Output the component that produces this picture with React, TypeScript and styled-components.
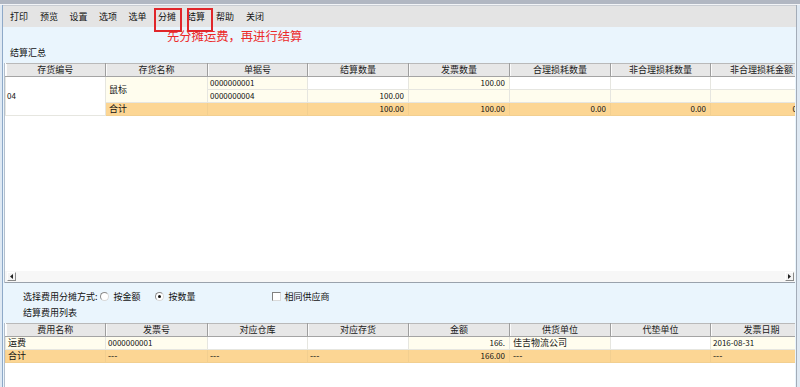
import React from 'react';
import styled, { createGlobalStyle } from 'styled-components';

const GlobalStyle = createGlobalStyle`
  html, body { margin: 0; padding: 0; overflow: hidden; background: #eaf5fd; }
  body { font-family: "Noto Sans CJK SC", "Noto Sans", sans-serif; font-size: 9px; color: #1c1c1c; }
  * { box-sizing: border-box; }
`;

const Window = styled.div`
  position: relative;
  width: 800px;
  height: 387px;
  display: flex;
  flex-direction: column;
  background: #dfe9f3;
  overflow: hidden;
`;

const TopEdge = styled.div`
  flex: none;
  height: 5px;
  background: #b1b7c2;
  border-bottom: 1px solid #f2f4f7;
`;

const Body = styled.div`
  flex: 1;
  min-height: 0;
  display: flex;
  flex-direction: column;
  margin: 0 3px 0 2px;
  border-left: 1px solid #8ea9c8;
  border-right: 1px solid #a3acb8;
  background: #eaf5fd;
`;

const Toolbar = styled.div`
  flex: none;
  height: 22px;
  display: flex;
  align-items: center;
  padding-left: 1px;
  background: #e4e4e4;
  border-top: 1px solid #c9cdd3;
`;

const ToolButton = styled.div<{ $w: number }>`
  width: ${p => p.$w}px;
  text-align: center;
  font-size: 9px;
  line-height: 20px;
  color: #111;
`;

const RedBox = styled.div<{ $left: number; $width: number }>`
  position: absolute;
  top: 8px;
  left: ${p => p.$left}px;
  width: ${p => p.$width}px;
  height: 24px;
  border: 2px solid #e0262a;
`;

const Note = styled.div`
  position: absolute;
  top: 29px;
  left: 167px;
  font-size: 12.3px;
  line-height: 15px;
  color: #ec2a2a;
  white-space: nowrap;
`;

const SectionLabel = styled.div`
  flex: none;
  height: 36px;
  padding: 19px 0 0 7px;
  line-height: 13px;
  font-size: 9px;
  color: #111;
`;

const Panel = styled.div<{ $height?: number }>`
  ${p => (p.$height ? `height: ${p.$height}px; flex: none;` : 'flex: 1; min-height: 0;')}
  margin: 0 1px;
  display: flex;
  flex-direction: column;
  background: #fff;
  border-left: 1px solid #b4bfcc;
`;

const Viewport = styled.div`
  flex: 1;
  min-height: 0;
  overflow: hidden;
`;

const Grid = styled.table`
  table-layout: fixed;
  border-collapse: collapse;
  width: 807px;
`;

const Th = styled.th`
  height: 13px;
  padding: 0;
  font-weight: normal;
  font-size: 9px;
  line-height: 12px;
  text-align: center;
  color: #1a1a1a;
  background: #e7e7e7;
  border-top: 1px solid #b9b9b9;
  border-bottom: 1px solid #a4a4a4;
  border-right: 1px solid #9e9e9e;
  box-shadow: inset 1px 0 #fbfbfb;
  white-space: nowrap;
  overflow: hidden;
`;

type Tone = 'cream' | 'white' | 'sum';
const toneBg: Record<Tone, string> = {
  cream: '#fffdee',
  white: '#ffffff',
  sum: '#fcd694',
};

const Td = styled.td<{ $tone: Tone; $num?: boolean; $digits?: boolean; $pad?: number }>`
  height: 13px;
  padding: 0 ${p => (p.$num ? 4 : 0)}px 0 ${p => p.$pad ?? 2}px;
  font-size: ${p => (p.$num || p.$digits ? 8 : 9)}px;
  line-height: 12px;
  text-align: ${p => (p.$num ? 'right' : 'left')};
  background: ${p => toneBg[p.$tone]};
  border: 1px solid ${p => (p.$tone === 'sum' ? '#f2cf90' : '#e6e6e0')};
  white-space: nowrap;
  overflow: hidden;
  color: #111;
`;

const Scrollbar = styled.div`
  flex: none;
  height: 12px;
  display: flex;
  align-items: center;
  justify-content: space-between;
  padding: 0 1px 1px 2px;
  background: #f7f7f7;
  border-bottom: 1px solid #9aa2ac;
`;

const ScrollButton = styled.div`
  width: 9px;
  height: 9px;
  display: flex;
  align-items: center;
  justify-content: center;
  background: #f4f4f4;
  border: 1px solid;
  border-color: #fff #8a8a8a #8a8a8a #fff;
`;

const Options = styled.div`
  flex: none;
  height: 40px;
  padding: 7px 0 0 20px;
  display: flex;
  flex-direction: column;
  gap: 3px;
`;

const OptionRow = styled.div`
  display: flex;
  align-items: center;
  height: 13px;
  line-height: 13px;
  font-size: 9px;
  color: #111;
`;

const Radio = styled.span<{ $checked?: boolean; $gap: number }>`
  width: 9px;
  height: 9px;
  margin-left: ${p => p.$gap}px;
  border-radius: 50%;
  border: 1px solid #8c8c8c;
  border-right-color: #d8d8d8;
  border-bottom-color: #d8d8d8;
  background: #fff;
  display: flex;
  align-items: center;
  justify-content: center;
  &::after {
    content: '';
    display: ${p => (p.$checked ? 'block' : 'none')};
    width: 3px;
    height: 3px;
    border-radius: 50%;
    background: #111;
  }
`;

const CheckBox = styled.span<{ $gap: number }>`
  width: 9px;
  height: 9px;
  margin-left: ${p => p.$gap}px;
  border: 1px solid #808080;
  border-right-color: #dadada;
  border-bottom-color: #dadada;
  background: #fff;
`;

const OptionText = styled.span<{ $gap: number }>`
  margin-left: ${p => p.$gap}px;
`;

const widths = [100, 102, 100, 101, 101, 101, 100, 102];

const Cols = () => (
  <colgroup>
    {widths.map((w, i) => (
      <col key={i} style={{ width: w }} />
    ))}
  </colgroup>
);

const head1 = ['存货编号', '存货名称', '单据号', '结算数量', '发票数量', '合理损耗数量', '非合理损耗数量', '非合理损耗金额'];
const head2 = ['费用名称', '发票号', '对应仓库', '对应存货', '金额', '供货单位', '代垫单位', '发票日期'];

const tools: [string, number][] = [
  ['打印', 30], ['预览', 30], ['设置', 29], ['选项', 30], ['选单', 29],
  ['分摊', 30], ['结算', 28], ['帮助', 30], ['关闭', 30],
];

const Arrow = ({ dir }: { dir: 'l' | 'r' }) => (
  <svg width="3" height="5" viewBox="0 0 3 5">
    {dir === 'l' ? <path d="M3 0 L0 2.5 L3 5 Z" fill="#222" /> : <path d="M0 0 L3 2.5 L0 5 Z" fill="#222" />}
  </svg>
);

export default function App() {
  return (
    <>
      <GlobalStyle />
      <Window>
        <TopEdge />
        <Body>
          <Toolbar>
            {tools.map(([t, w]) => (
              <ToolButton key={t} $w={w}>{t}</ToolButton>
            ))}
          </Toolbar>
          <SectionLabel>结算汇总</SectionLabel>
          <Panel $height={220}>
            <Viewport>
              <Grid>
                <Cols />
                <thead>
                  <tr>{head1.map(h => <Th key={h}>{h}</Th>)}</tr>
                </thead>
                <tbody>
                  <tr>
                    <Td $tone="white" rowSpan={3} $pad={1} $digits>04</Td>
                    <Td $tone="cream" rowSpan={2} $pad={3}>鼠标</Td>
                    <Td $tone="cream" $digits>0000000001</Td>
                    <Td $tone="white" $num />
                    <Td $tone="cream" $num>100.00</Td>
                    <Td $tone="white" />
                    <Td $tone="white" />
                    <Td $tone="white" />
                  </tr>
                  <tr>
                    <Td $tone="cream" $digits>0000000004</Td>
                    <Td $tone="cream" $num>100.00</Td>
                    <Td $tone="cream" $num />
                    <Td $tone="cream" />
                    <Td $tone="cream" />
                    <Td $tone="cream" />
                  </tr>
                  <tr>
                    <Td $tone="sum" $pad={3}>合计</Td>
                    <Td $tone="sum" />
                    <Td $tone="sum" $num>100.00</Td>
                    <Td $tone="sum" $num>100.00</Td>
                    <Td $tone="sum" $num>0.00</Td>
                    <Td $tone="sum" $num>0.00</Td>
                    <Td $tone="sum" $num>0.00</Td>
                  </tr>
                </tbody>
              </Grid>
            </Viewport>
            <Scrollbar>
              <ScrollButton><Arrow dir="l" /></ScrollButton>
              <ScrollButton><Arrow dir="r" /></ScrollButton>
            </Scrollbar>
          </Panel>
          <Options>
            <OptionRow>
              <span>选择费用分摊方式:</span>
              <Radio $gap={2} />
              <OptionText $gap={5}>按金额</OptionText>
              <Radio $gap={14} $checked />
              <OptionText $gap={5}>按数量</OptionText>
              <CheckBox $gap={76} />
              <OptionText $gap={4}>相同供应商</OptionText>
            </OptionRow>
            <OptionRow>结算费用列表</OptionRow>
          </Options>
          <Panel>
            <Viewport>
              <Grid>
                <Cols />
                <thead>
                  <tr>{head2.map(h => <Th key={h}>{h}</Th>)}</tr>
                </thead>
                <tbody>
                  <tr>
                    <Td $tone="cream" $pad={2}>运费</Td>
                    <Td $tone="cream" $digits>0000000001</Td>
                    <Td $tone="white" />
                    <Td $tone="white" />
                    <Td $tone="cream" $num>166.</Td>
                    <Td $tone="cream" $pad={3}>佳吉物流公司</Td>
                    <Td $tone="white" />
                    <Td $tone="cream" $digits>2016-08-31</Td>
                  </tr>
                  <tr>
                    <Td $tone="sum" $pad={2}>合计</Td>
                    <Td $tone="sum">---</Td>
                    <Td $tone="sum">---</Td>
                    <Td $tone="sum">---</Td>
                    <Td $tone="sum" $num>166.00</Td>
                    <Td $tone="sum" $pad={3}>---</Td>
                    <Td $tone="sum" />
                    <Td $tone="sum">---</Td>
                  </tr>
                </tbody>
              </Grid>
            </Viewport>
          </Panel>
        </Body>
        <RedBox $left={154} $width={28} />
        <RedBox $left={187} $width={26} />
        <Note>先分摊运费，再进行结算</Note>
      </Window>
    </>
  );
}
